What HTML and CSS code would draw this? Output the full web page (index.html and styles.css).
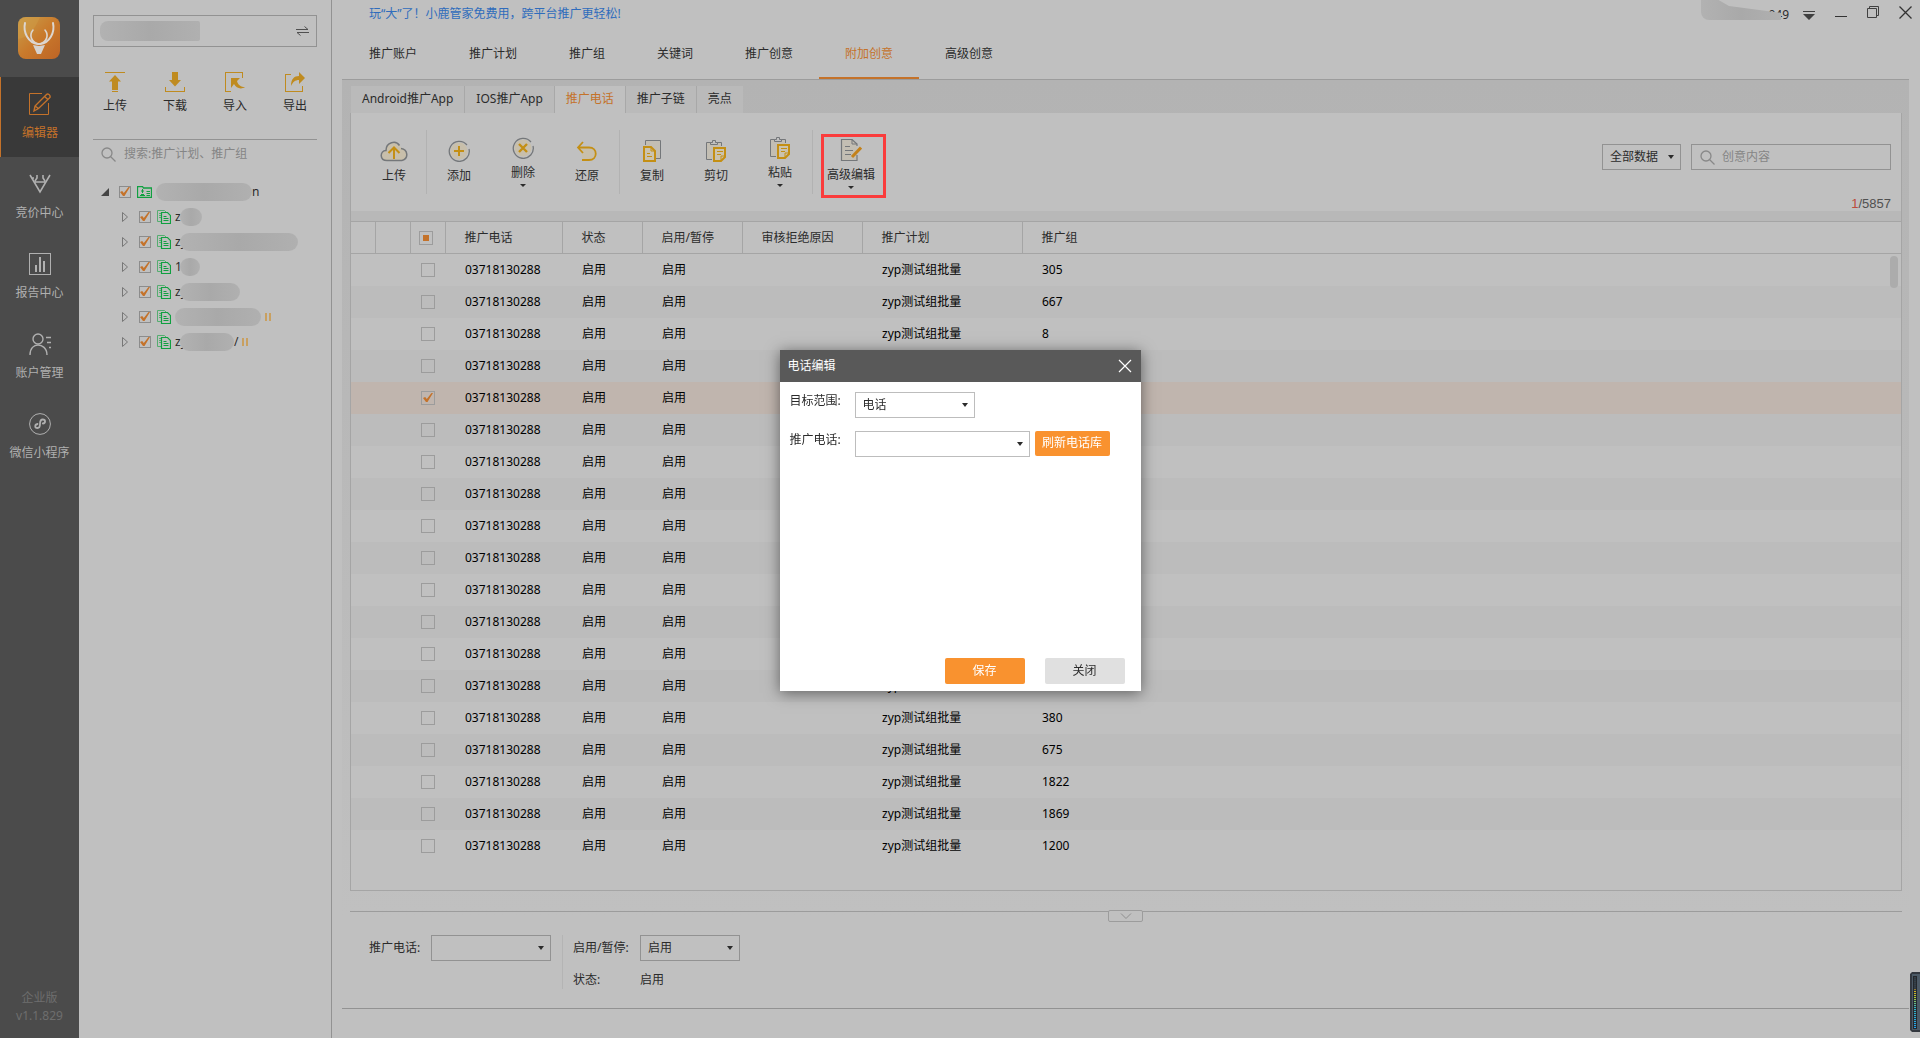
FILE: index.html
```html
<!DOCTYPE html>
<html lang="zh-CN">
<head>
    <title>小鹿管家</title>
    <meta charset="utf-8">
    <meta name="viewport" content="width=device-width, initial-scale=1">
    <link rel="stylesheet" href="styles.css">
</head>
<body>
<div class="app">
    <!-- Dark module bar -->
    <nav class="sidebar">
        <svg class="logo" width="42" height="42" viewBox="0 0 42 42">
            <defs>
                <linearGradient id="logo-bg" x1="0" y1="0" x2="1" y2="1">
                    <stop offset="0" stop-color="#c9a04c"/>
                    <stop offset="0.5" stop-color="#c97a2c"/>
                    <stop offset="1" stop-color="#bd6425"/>
                </linearGradient>
            </defs>
            <rect width="42" height="42" rx="8" fill="url(#logo-bg)"/>
            <path d="M0 22Q14 20 22 0H8Q0 0 0 8z" fill="#cf9c45" opacity=".5"/>
            <g fill="none" stroke="#dcd6d0" stroke-linecap="round">
                <path d="M7 6C5 15 10 26 20 27h2C32 26 37 15 35 6" stroke-width="2"/>
                <path d="M15 13c-4 5-2 12 5 14M27 13c4 5 2 12-5 14" stroke-width="1.6"/>
            </g>
            <path d="M15 28l6 1 6-1-4 9h-4z" fill="#d6d2ce"/>
        </svg>
        <a href="#" class="module active">
            <svg width="22" height="22" viewBox="0 0 22 22" fill="none" stroke="currentColor">
                <path d="M13 .5H.5v21h19V10"/>
                <path d="M5 18l1-5L17.500 1.500q1-1 2.500 0t1 3L9.500 15.500zM6 13l3.500 2.500M15.500 3.500l3.500 3" stroke-width="1.400"/>
            </svg>
            <span>编辑器</span>
        </a>
        <a href="#" class="module">
            <svg width="22" height="22" viewBox="0 0 22 22" fill="none" stroke="currentColor" stroke-width="1.600">
                <path d="M1 2l10 17L21 2M5 9h12M8 2v3l-2 3M14 2v3l2 3M3 5h2"/>
            </svg>
            <span>竞价中心</span>
        </a>
        <a href="#" class="module">
            <svg width="22" height="22" viewBox="0 0 22 22" fill="none" stroke="currentColor">
                <rect x=".5" y=".5" width="21" height="21"/>
                <path d="M7 19v-7M11 19V4M15 19V8" stroke-width="2"/>
            </svg>
            <span>报告中心</span>
        </a>
        <a href="#" class="module">
            <svg width="22" height="22" viewBox="0 0 22 22" fill="none" stroke="currentColor" stroke-width="1.400">
                <circle cx="9" cy="6" r="5"/>
                <path d="M1 22c0-7 4-10 8-10s9 3 9 10M17 4.500h5M18 9.500h4M20 14.500h2"/>
            </svg>
            <span>账户管理</span>
        </a>
        <a href="#" class="module">
            <svg width="22" height="22" viewBox="0 0 22 22" fill="none" stroke="currentColor">
                <circle cx="11" cy="11" r="10.400"/>
                <path d="M8.500 11c-3 .5-3 4 0 4 2 0 2.500-1.500 2.500-4s.5-4.500 2.800-4.500c3 0 3 3.700 0 4" stroke-width="1.800" stroke-linecap="round"/>
            </svg>
            <span>微信小程序</span>
        </a>
        <p class="version">企业版<br>v1.1.829</p>
    </nav>

    <!-- Account tree -->
    <aside class="tree-panel">
        <button class="account-switch" aria-label="切换账户">
            <span class="mask mask-account"></span>
            <svg width="13" height="10" viewBox="0 0 13 10" fill="none" stroke="#505050"><path d="M0 3.500h12L8.500.5M13 6.500H1L4.500 9.500"/></svg>
        </button>
        <div class="actions">
            <button>
                <svg width="20" height="20" viewBox="0 0 20 20" fill="#bf8b20"><path d="M0 0h20v1H0zM10 3l6 6.500h-3V18H7V9.500H4zM7 19h6v1H7z"/></svg>
                上传
            </button>
            <button>
                <svg width="20" height="20" viewBox="0 0 20 20" fill="#bf8b20"><path d="M7 0h6v8h3l-6 6.500L4 8h3zM0 15h1v4h18v-4h1v5H0z"/></svg>
                下载
            </button>
            <button>
                <svg width="20" height="20" viewBox="0 0 20 20" fill="#bf8b20"><path d="M0 0h18v6h-1V1H1v18h5v1H0zM6 6h9l-3 3c1 4 4 6 8 6-4 3-9 1-11-3l-3 4z"/></svg>
                导入
            </button>
            <button>
                <svg width="20" height="20" viewBox="0 0 20 20" fill="#bf8b20"><path d="M0 2h6v1H1v16h16v-5h1v6H0zM6 14C6 7 9 4 14 4V0l6 6-6 6V8c-4 0-6 2-8 6z"/></svg>
                导出
            </button>
        </div>
        <label class="tree-search">
            <svg width="15" height="15" viewBox="0 0 15 15" fill="none" stroke="#888" stroke-width="1.300"><circle cx="6" cy="6" r="5"/><path d="M9.500 9.500l5 5"/></svg>
            <input type="text" placeholder="搜索:推广计划、推广组">
        </label>
        <ul class="tree" id="tree"></ul>
    </aside>

    <main class="main">
        <header class="topbar">
            <a href="#" class="promo">玩“大”了！小鹿管家免费用，跨平台推广更轻松!</a>
            <div class="window-tools">
                <span class="user">049<span class="mask mask-user"></span></span>
                <button class="low" aria-label="菜单"><svg width="12" height="12" viewBox="0 0 12 12" fill="#404040"><path d="M0 2h12v1H0zM0 5h12l-6 6z"/></svg></button>
                <button class="low" aria-label="最小化"><svg width="12" height="12" viewBox="0 0 12 12" fill="#333"><path d="M0 7h12v1H0z"/></svg></button>
                <button aria-label="还原窗口"><svg width="12" height="12" viewBox="0 0 12 12" fill="none" stroke="#404040"><path d="M.5 2.500h9v9h-9zM2.500 2.500v-2h9v9h-2"/></svg></button>
                <button aria-label="关闭窗口"><svg width="13" height="13" viewBox="0 0 13 13" fill="none" stroke="#333" stroke-width="1.300"><path d="M.5.5l12 12M12.500.5l-12 12"/></svg></button>
            </div>
        </header>
        <nav class="nav">
            <a href="#">推广账户</a>
            <a href="#">推广计划</a>
            <a href="#">推广组</a>
            <a href="#">关键词</a>
            <a href="#">推广创意</a>
            <a href="#" class="active">附加创意</a>
            <a href="#">高级创意</a>
        </nav>

        <div class="workspace">
            <div class="subtabs">
                <a href="#">Android推广App</a>
                <a href="#">IOS推广App</a>
                <a href="#" class="active">推广电话</a>
                <a href="#">推广子链</a>
                <a href="#">亮点</a>
            </div>
            <section class="card">
                <div class="toolbar">
                    <div class="group">
                        <button>
                            <svg width="28" height="22" viewBox="0 0 28 22" fill="none">
                                <path d="M20 20.500H7C-.5 20.500-.5 11 6 10.500c0-8 12-11 15-2.500 7 0 9 11 1 12.500z" fill="#c8bfab"/>
                                <path d="M22 20.500H7C-.5 20.500-.5 11 6 10.500 6 2 16 0 19.500 5.500M21 8.500c7 1 8 10 1 12" stroke="#74777a" stroke-width="1.500"/>
                                <path d="M14 19V8M8.500 13L14 7.500l5.500 5.500" stroke="#c48f14" stroke-width="2"/>
                            </svg>
                            上传
                        </button>
                    </div>
                    <div class="group">
                        <button>
                            <svg width="22" height="22" viewBox="0 0 22 22" fill="none">
                                <circle cx="11" cy="11" r="8.500" fill="#c8bfab"/>
                                <path d="M19 5A10 10 0 1 0 21 9" stroke="#74777a" stroke-width="1.300"/>
                                <path d="M6 11h10M11 6v10" stroke="#c48f14" stroke-width="2"/>
                            </svg>
                            添加
                        </button>
                        <button class="has-menu">
                            <svg width="22" height="22" viewBox="0 0 22 22" fill="none">
                                <circle cx="11" cy="11" r="8.500" fill="#c8bfab"/>
                                <path d="M19 5A10 10 0 1 0 21 9" stroke="#74777a" stroke-width="1.300"/>
                                <path d="M7 7l8 8M15 7l-8 8" stroke="#c48f14" stroke-width="2.400"/>
                            </svg>
                            删除
                        </button>
                        <button>
                            <svg width="22" height="22" viewBox="0 0 22 22" fill="none">
                                <path d="M4 8h9c8 0 8 12 0 12H7z" fill="#c8bfab"/>
                                <path d="M7 2L2 7.500 7 13M2 7.500h11c9 0 9 12.500 0 12.500H6" stroke="#c48f14" stroke-width="1.800"/>
                            </svg>
                            还原
                        </button>
                    </div>
                    <div class="group">
                        <button>
                            <svg width="20" height="22" viewBox="0 0 20 22" fill="none">
                                <path d="M3.500 5V.5h15v18H14" fill="#c3beb3" stroke="#74777a"/>
                                <path d="M2 7h7l4 4v10H2z" fill="#cbc3ae" stroke="#c48f14" stroke-width="2"/>
                                <path d="M9 7v4h4M5 13.500h3M5 16.500h5" stroke="#c48f14"/>
                            </svg>
                            复制
                        </button>
                        <button>
                            <svg width="22" height="22" viewBox="0 0 22 22" fill="none">
                                <path d="M7 19.500H1.500v-17H16.500V6" fill="#c3beb3" stroke="#74777a"/>
                                <path d="M5.500 4.500v-2h2V.5h3v2h2v2z" fill="#c0c0c0" stroke="#74777a"/>
                                <path d="M9 8h11v9l-4 4H9z" fill="#cbc3ae" stroke="#c48f14" stroke-width="2"/>
                                <path d="M20 16h-4v5M12 11.500h6M12 14.500h4" stroke="#c48f14"/>
                            </svg>
                            剪切
                        </button>
                        <button class="has-menu">
                            <svg width="22" height="22" viewBox="0 0 22 22" fill="none">
                                <path d="M7 19.500H1.500v-17H16.500V6" fill="#c3beb3" stroke="#74777a"/>
                                <path d="M5.500 4.500v-2h2V.5h3v2h2v2z" fill="#c0c0c0" stroke="#74777a"/>
                                <path d="M9 8h11v9l-4 4H9z" fill="#cbc3ae" stroke="#c48f14" stroke-width="2"/>
                                <path d="M20 16h-4v5M12 11.500h6M12 14.500h4" stroke="#c48f14"/>
                            </svg>
                            粘贴
                        </button>
                    </div>
                    <button class="has-menu highlighted">
                        <svg width="22" height="22" viewBox="0 0 22 22" fill="none">
                            <path d="M17 7V5l-5-4.500H1.500v21H17V16" fill="#c3beb3" stroke="#74777a" stroke-width="1.200"/>
                            <path d="M12 .5V5h5M5 7.500h5M5 11.500h8M5 15.500h6" stroke="#74777a"/>
                            <path d="M12 18l9-9.500" stroke="#c3811a" stroke-width="3"/>
                        </svg>
                        高级编辑
                    </button>
                    <div class="filters">
                        <div class="filter-row">
                            <span class="select range"><select aria-label="数据范围"><option>全部数据</option></select></span>
                            <label class="search-box">
                                <svg width="15" height="15" viewBox="0 0 15 15" fill="none" stroke="#888" stroke-width="1.300"><circle cx="6" cy="6" r="5"/><path d="M9.500 9.500l5 5"/></svg>
                                <input type="text" placeholder="创意内容">
                            </label>
                        </div>
                        <p class="count"><em>1</em>/5857</p>
                    </div>
                </div>
                <div class="table-wrap">
                    <table>
                        <thead>
                        <tr>
                            <th class="col-gap"></th>
                            <th class="col-mark"></th>
                            <th class="col-check"><input type="checkbox" class="partial" aria-label="全选"></th>
                            <th class="col-phone">推广电话</th>
                            <th class="col-state">状态</th>
                            <th class="col-switch">启用/暂停</th>
                            <th class="col-reason">审核拒绝原因</th>
                            <th class="col-plan">推广计划</th>
                            <th class="col-group">推广组</th>
                        </tr>
                        </thead>
                        <tbody id="phone-rows"></tbody>
                    </table>
                    <div class="scroll-thumb"></div>
                </div>
            </section>
            <section class="detail">
                <button class="collapse" aria-label="收起"><svg width="12" height="6" viewBox="0 0 12 6" fill="none" stroke="#8e8e8e"><path d="M1 .5l5 5 5-5"/></svg></button>
                <div class="detail-phone">
                    <label for="detail-phone">推广电话:</label>
                    <span class="select"><select id="detail-phone"><option></option></select></span>
                </div>
                <div class="detail-state">
                    <label for="detail-switch">启用/暂停:</label>
                    <span class="select"><select id="detail-switch"><option>启用</option></select></span>
                    <span>状态:</span>
                    <span>启用</span>
                </div>
            </section>
        </div>
    </main>

    <svg class="meter" width="10" height="60" viewBox="0 0 10 60">
        <defs>
            <linearGradient id="level" x1="0" y1="0" x2="0" y2="1">
                <stop offset="0" stop-color="#3a3f45"/>
                <stop offset=".24" stop-color="#3a3f45"/>
                <stop offset=".25" stop-color="#e0a820"/>
                <stop offset=".4" stop-color="#b5c82e"/>
                <stop offset=".6" stop-color="#35b5c0"/>
                <stop offset="1" stop-color="#22a4f0"/>
            </linearGradient>
        </defs>
        <path d="M2 0h8v60H2L0 58V2z" fill="#33383f"/>
        <path d="M2 2h8v56H2z" fill="#4c5a66"/>
        <path d="M3 4h4v53H3z" fill="#23272c"/>
        <rect x="4" y="5" width="2" height="51" fill="url(#level)"/>
        <path d="M5 6v50" stroke="#2b3a44" stroke-width="2" stroke-dasharray="1 1"/>
    </svg>
</div>

<div class="overlay">
    <div class="dialog" role="dialog" aria-labelledby="dialog-title">
        <div class="dialog-head">
            <h2 id="dialog-title">电话编辑</h2>
            <button aria-label="关闭对话框"><svg width="14" height="14" viewBox="0 0 14 14" fill="none" stroke="#fff" stroke-width="1.200"><path d="M1 1l12 12M13 1L1 13"/></svg></button>
        </div>
        <form class="dialog-body">
            <div class="field">
                <label for="target-range">目标范围:</label>
                <span class="select short"><select id="target-range"><option>电话</option></select></span>
            </div>
            <div class="field">
                <label for="target-phone">推广电话:</label>
                <span class="select long"><select id="target-phone"><option></option></select></span>
                <button type="button" class="refresh">刷新电话库</button>
            </div>
        </form>
        <div class="dialog-foot">
            <button class="save">保存</button>
            <button class="cancel">关闭</button>
        </div>
    </div>
</div>

<script>
    // Name fragments and mask widths of the account tree
    const nodes = [
        { name: "", width: 96, tail: "n", root: true },
        { name: "z", width: 22 },
        { name: "zy", width: 118 },
        { name: "1", width: 20 },
        { name: "zy", width: 60 },
        { name: "", width: 86, paused: true },
        { name: "zy", width: 54, tail: "/", paused: true }
    ];

    const folderIcon = `<svg width="15" height="12" viewBox="0 0 15 12" fill="none" stroke="#10a040"><path d="M.5 11.500V.5h5l1 1.500h8v9.500z" stroke-width="1.300"/><path d="M3 9.500h5M4 8.500h3M5.500 3v4M4 5h3M9.500 5.500H13M9.500 7.500H13M9.500 9.500H13"/></svg>`;
    const planIcon = `<svg width="14" height="14" viewBox="0 0 14 14" fill="none" stroke="#10a040"><path d="M4 11.500H.5V.5h7L9 2" stroke="#55ad70"/><path d="M2 3.500h2M2 5.500h2M2 7.500h2" stroke="#55ad70"/><path d="M4.500 2.500h6l3 3v8h-9zM6.500 6.500h3M6.500 8.500h5M6.500 10.500h5" stroke-width="1.200"/></svg>`;

    document.getElementById("tree").innerHTML = nodes.map(node => `
        <li class="${node.root ? "root" : ""}">
            <span class="arrow"><svg width="8" height="10" viewBox="0 0 8 10">${node.root
                ? '<path d="M8 1v8H0z" fill="#444"/>'
                : '<path d="M1.500.5l5 4.500-5 4.500z" fill="none" stroke="#777"/>'}</svg></span>
            <input type="checkbox" checked aria-label="选择">
            ${node.root ? folderIcon : planIcon}
            <span class="name"><span class="start">${node.name}</span><span class="mask" style="width: ${node.width}px"></span>${node.tail || ""}</span>
            ${node.paused ? '<span class="paused"></span>' : ""}
        </li>`).join("");

    const groups = [305, 667, 8, "", "", "", "", "", "", "", "", "", "", "", 380, 675, 1822, 1869, 1200];
    const selected = 4;

    document.getElementById("phone-rows").innerHTML = groups.map((group, i) => `
        <tr class="${i === selected ? "selected" : ""}">
            <td></td>
            <td></td>
            <td class="col-check"><input type="checkbox" aria-label="选择" ${i === selected ? "checked" : ""}></td>
            <td>03718130288</td>
            <td>启用</td>
            <td>启用</td>
            <td></td>
            <td>zyp测试组批量</td>
            <td>${group}</td>
        </tr>`).join("");
</script>
</body>
</html>
```
FILE: styles.css
```css
* {
    box-sizing: border-box;
}

body {
    margin: 0;
    background-color: #c0c0c0;
    color: #2b2b2b;
    font-family: "Noto Sans", "Noto Sans CJK SC", sans-serif;
    font-size: 12px;
    line-height: 18px;
}

a {
    color: inherit;
    text-decoration: none;
}

button, input, select {
    font: inherit;
    color: inherit;
}

button {
    padding: 0;
    border: none;
    background: none;
    cursor: pointer;
}

svg {
    display: block;
    flex: none;
}

.app {
    position: relative;
    display: flex;
    min-height: 100vh;
}

/* Grey smear over private names */
.mask {
    display: inline-block;
    height: 18px;
    border-radius: 9px;
    background: linear-gradient(90deg, #b2b2b2, #a9a9a9 50%, #b0b0b0);
}

/* Checkboxes */
input[type=checkbox] {
    appearance: none;
    display: grid;
    place-items: center;
    flex: none;
    width: 14px;
    height: 14px;
    margin: 0;
    border: 1px solid #9c9c9c;
}

.tree input[type=checkbox] {
    width: 12px;
    height: 12px;
    border-color: #8c8c8c;
}

input[type=checkbox]:checked::before {
    content: "";
    width: 10px;
    height: 9px;
    background-color: #c4722a;
    clip-path: polygon(0 55%, 22% 45%, 38% 68%, 85% 0, 100% 0, 45% 100%, 30% 100%);
}

input.partial::before {
    content: "";
    width: 6px;
    height: 6px;
    background-color: #c4722a;
}

/* Drop-downs */
.select {
    position: relative;
    display: block;
    height: 26px;
}

.select select {
    appearance: none;
    display: block;
    width: 100%;
    height: 100%;
    padding: 0 7px;
    border: 1px solid #929292;
    border-radius: 0;
    background: none;
}

.select::after {
    content: "";
    position: absolute;
    top: 11px;
    right: 7px;
    border: 3px solid transparent;
    border-top: 4px solid #2b2b2b;
    border-bottom: none;
    pointer-events: none;
}

/* Module bar */
.sidebar {
    display: flex;
    flex-direction: column;
    flex: none;
    width: 79px;
    background-color: #4b4b4b;
    color: #b0b0b0;
    text-align: center;
}

.logo {
    margin: 17px 18px 18px;
}

.module {
    display: flex;
    flex-direction: column;
    align-items: center;
    gap: 9px;
    height: 80px;
    padding-top: 16px;
}

.module.active {
    border-left: 1px solid #c4722a;
    background-color: #393939;
    color: #c4722a;
}

.version {
    margin: auto 0 13px;
    color: #6e6e6e;
}

/* Account tree */
.tree-panel {
    flex: none;
    width: 253px;
    padding: 15px 14px;
    border-right: 1px solid #929292;
}

.account-switch {
    display: flex;
    align-items: center;
    justify-content: space-between;
    width: 100%;
    height: 32px;
    padding: 0 7px 0 6px;
    border: 1px solid #929292;
}

.mask-account {
    width: 100px;
    height: 20px;
    border-radius: 8px 2px 2px 8px;
}

.actions {
    display: flex;
    justify-content: space-between;
    padding: 25px 8px 24px 8px;
    border-bottom: 1px solid #929292;
}

.actions button {
    display: flex;
    flex-direction: column;
    align-items: center;
    gap: 5px;
    width: 28px;
    white-space: nowrap;
}

.tree-search {
    display: flex;
    align-items: center;
    gap: 8px;
    height: 28px;
    padding-left: 8px;
}

.tree-search input, .search-box input {
    flex: 1;
    min-width: 0;
    padding: 0;
    border: none;
    outline: none;
    background: none;
}

::placeholder {
    color: #858585;
    opacity: 1;
}

.tree {
    margin: 11px 0 0;
    padding: 0;
    list-style: none;
}

.tree li {
    display: flex;
    align-items: center;
    height: 25px;
    padding-left: 28px;
}

.tree li.root {
    padding-left: 8px;
}

.arrow {
    width: 18px;
}

.tree input {
    margin-right: 6px;
}

.name {
    display: flex;
    align-items: center;
    padding-left: 4px;
}

/* The mask runs over the end of the name */
.start {
    max-width: 5px;
}

.name .mask {
    z-index: 1;
}

.paused {
    width: 6px;
    height: 8px;
    margin-left: 4px;
    border: solid #c9a060;
    border-width: 0 2px;
}

/* Top bar */
.main {
    display: flex;
    flex-direction: column;
    flex: 1;
    min-width: 0;
    padding: 0 8px 29px 10px;
}

.topbar {
    display: flex;
    justify-content: space-between;
    align-items: flex-start;
    height: 28px;
}

.promo {
    padding: 5px 27px;
    color: #2f6cbc;
}

.window-tools {
    display: flex;
    align-items: flex-start;
    gap: 20px;
}

.window-tools button {
    padding-top: 6px;
}

.window-tools .low {
    padding-top: 9px;
}

.user {
    position: relative;
    margin-right: -6px;
    padding-top: 6px;
}

.mask-user {
    position: absolute;
    top: 0;
    right: 8px;
    width: 80px;
    height: 20px;
    border-radius: 0 0 0 8px;
    clip-path: polygon(0 0, 22% 0, 35% 30%, 100% 65%, 100% 100%, 0 100%);
}

.nav {
    display: flex;
    height: 51px;
    padding-left: 1px;
}

.nav a {
    padding: 17px 26px 0;
}

.nav .active {
    border-bottom: 2px solid #c4722a;
    color: #c4722a;
}

/* Workspace */
.workspace {
    display: flex;
    flex-direction: column;
    flex: 1;
    margin-right: 3px;
    padding: 0 7px 0 8px;
    border-top: 1px solid #9c9c9c;
    border-bottom: 1px solid #929292;
    background: linear-gradient(#b3b3b3, #c0c0c0 90%);
}

.subtabs {
    display: flex;
    padding-top: 6px;
    padding-left: 1px;
}

.subtabs a {
    height: 27px;
    padding: 4px 11px;
    border-right: 1px solid #a8a8a8;
    background-color: #bababa;
}

.subtabs a:last-child {
    border-right: none;
}

.subtabs .active {
    background-color: #c0c0c0;
    color: #c4722a;
}

.card {
    display: flex;
    flex-direction: column;
    flex: 1;
    border: 1px solid #a5a5a5;
    border-top: none;
    background-color: #c0c0c0;
}

.toolbar {
    display: flex;
    height: 108px;
    padding: 17px 10px 0 11px;
    border-bottom: 10px solid #b8b8b8;
}

.toolbar button {
    display: flex;
    flex-direction: column;
    align-items: center;
    justify-content: center;
    gap: 5px;
    width: 64px;
    height: 64px;
}

.group {
    display: flex;
    height: 64px;
    border-right: 1px solid #b2b2b2;
}

.has-menu::after {
    content: "";
    margin-top: -3px;
    border: 3px solid transparent;
    border-top: 3px solid #2b2b2b;
    border-bottom: none;
}

.toolbar .highlighted {
    width: 65px;
    margin: 4px 0 0 8px;
    padding: 0 5px 4px 0;
    border: 3px solid #fa3c3c;
}

.filters {
    margin-left: auto;
}

.filter-row {
    display: flex;
    gap: 10px;
    padding-top: 14px;
}

.range {
    width: 79px;
}

.search-box {
    display: flex;
    align-items: center;
    gap: 7px;
    width: 200px;
    height: 26px;
    padding: 0 8px;
    border: 1px solid #929292;
}

.count {
    margin: 25px 0 0;
    color: #505050;
    font-family: "Liberation Sans", sans-serif;
    font-size: 13px;
    text-align: right;
}

.count em {
    color: #bd4b3c;
    font-style: normal;
}

/* Phone table */
.table-wrap {
    position: relative;
    flex: 1;
}

table {
    width: 100%;
    border-collapse: collapse;
    table-layout: fixed;
}

th, td {
    height: 32px;
    padding: 1px 0 0 20px;
    font-weight: normal;
    text-align: left;
}

th {
    padding-left: 19px;
    border: solid #a5a5a5;
    border-width: 1px 1px 1px 0;
}

th:last-child {
    border-right: none;
}

td {
    color: #000;
}

tbody tr:nth-child(even) {
    background-color: #bcbcbc;
}

tbody tr.selected {
    background-color: #c0b5ae;
}

.col-gap {
    width: 24px;
}

.col-mark, .col-check {
    width: 35px;
}

th.col-check {
    padding-left: 8px;
}

td.col-check {
    padding: 0 0 0 11px;
}

.col-phone {
    width: 117px;
}

.col-state {
    width: 80px;
}

.col-switch {
    width: 100px;
}

.col-reason {
    width: 120px;
}

.col-plan {
    width: 160px;
}

.scroll-thumb {
    position: absolute;
    top: 35px;
    right: 3px;
    width: 8px;
    height: 32px;
    border-radius: 4px;
    background-color: #acacac;
}

/* Detail strip under the table */
.detail {
    position: relative;
    display: flex;
    height: 97px;
    margin-top: 20px;
    padding: 23px 19px 0;
    border-top: 1px solid #9c9c9c;
}

.collapse {
    position: absolute;
    top: -2px;
    left: 50%;
    display: grid;
    place-items: center;
    width: 35px;
    height: 12px;
    margin-left: -18px;
    border: 1px solid #9c9c9c;
    border-radius: 2px;
    background-color: #c0c0c0;
}

.detail-phone {
    display: grid;
    grid-template-columns: 54px 120px;
    gap: 8px;
    align-items: center;
    align-self: flex-start;
    padding-right: 11px;
}

.detail-state {
    display: grid;
    grid-template-columns: 57px 100px;
    gap: 10px;
    align-items: center;
    align-self: flex-start;
    padding-left: 10px;
    border-left: 1px solid #b4b4b4;
}

.meter {
    position: absolute;
    right: 0;
    bottom: 6px;
}

/* Phone edit dialog */
.overlay {
    position: fixed;
    inset: 0;
    display: grid;
    place-items: center;
    padding-top: 2px;
}

.dialog {
    display: flex;
    flex-direction: column;
    width: 361px;
    height: 341px;
    background-color: #fff;
    box-shadow: 0 2px 14px rgba(0, 0, 0, 0.5);
}

.dialog-head {
    display: flex;
    align-items: center;
    justify-content: space-between;
    height: 32px;
    padding: 0 9px 0 8px;
    background-color: #595959;
    color: #fff;
}

.dialog-head h2 {
    margin: 0;
    font-size: 12px;
    font-weight: normal;
}

.dialog-body {
    display: grid;
    gap: 13px;
    padding: 10px;
}

.field {
    display: flex;
    gap: 5px;
}

.field label {
    width: 60px;
}

.field select {
    border-color: #bdbdbd;
}

.short {
    width: 120px;
}

.long {
    width: 175px;
}

.refresh {
    width: 75px;
    height: 25px;
    border-radius: 2px;
    background-color: #f9922f;
    color: #fff;
}

.dialog-foot {
    display: flex;
    justify-content: flex-end;
    gap: 20px;
    margin-top: auto;
    padding: 0 16px 7px;
}

.dialog-foot button {
    width: 80px;
    height: 26px;
    border-radius: 2px;
}

.save {
    background-color: #f9922f;
    color: #fff;
}

.cancel {
    background-color: #e0e0e0;
}
```
